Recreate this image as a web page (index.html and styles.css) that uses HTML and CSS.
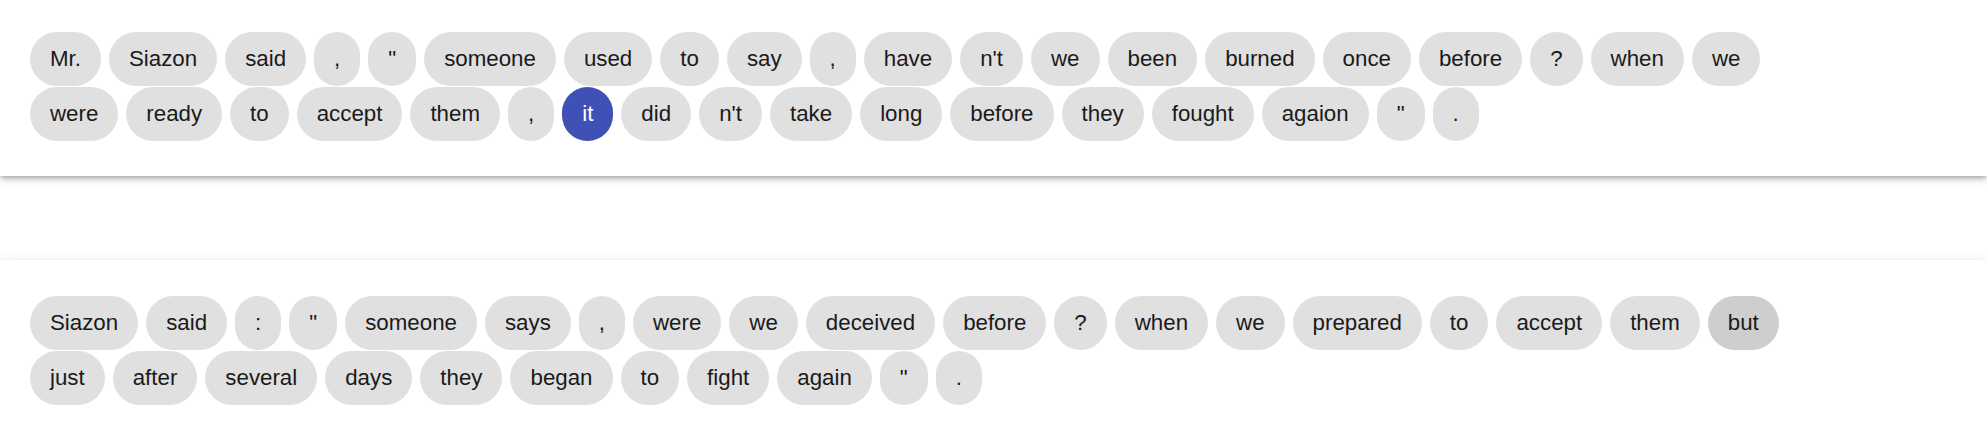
FILE: index.html
```html
<!DOCTYPE html>
<html lang="en">
<head>
<meta charset="utf-8">
<title>Sentence tokens</title>
<link rel="stylesheet" href="styles.css">
</head>
<body>
<main class="page">
  <section class="card">
    <div class="chips">
      <span class="chip">Mr.</span><span class="chip">Siazon</span><span class="chip">said</span><span class="chip">,</span><span class="chip">"</span><span class="chip">someone</span><span class="chip">used</span><span class="chip">to</span><span class="chip">say</span><span class="chip">,</span><span class="chip">have</span><span class="chip">n't</span><span class="chip">we</span><span class="chip">been</span><span class="chip">burned</span><span class="chip">once</span><span class="chip">before</span><span class="chip">?</span><span class="chip">when</span><span class="chip">we</span><span class="chip">were</span><span class="chip">ready</span><span class="chip">to</span><span class="chip">accept</span><span class="chip">them</span><span class="chip">,</span><span class="chip chip-selected">it</span><span class="chip">did</span><span class="chip">n't</span><span class="chip">take</span><span class="chip">long</span><span class="chip">before</span><span class="chip">they</span><span class="chip">fought</span><span class="chip">agaion</span><span class="chip">"</span><span class="chip">.</span>
    </div>
  </section>
  <section class="card card-last">
    <div class="chips">
      <span class="chip">Siazon</span><span class="chip">said</span><span class="chip">:</span><span class="chip">"</span><span class="chip">someone</span><span class="chip">says</span><span class="chip">,</span><span class="chip">were</span><span class="chip">we</span><span class="chip">deceived</span><span class="chip">before</span><span class="chip">?</span><span class="chip">when</span><span class="chip">we</span><span class="chip">prepared</span><span class="chip">to</span><span class="chip">accept</span><span class="chip">them</span><span class="chip chip-hover">but</span><span class="chip">just</span><span class="chip">after</span><span class="chip">several</span><span class="chip">days</span><span class="chip">they</span><span class="chip">began</span><span class="chip">to</span><span class="chip">fight</span><span class="chip">again</span><span class="chip">"</span><span class="chip">.</span>
    </div>
  </section>
</main>
</body>
</html>
```
FILE: styles.css
```css
html, body {
  margin: 0;
  padding: 0;
}
body {
  background: #ffffff;
  font-family: "Liberation Sans", Arial, sans-serif;
  color: #1a1a1a;
  overflow: hidden;
}
.page {
  display: flex;
  flex-direction: column;
  gap: 84px;
  margin-top: -4px;
}
.card {
  background: #ffffff;
  padding: 36px 30px 35px;
  box-shadow: 0 2px 4px -1px rgba(0,0,0,0.24), 0 4px 6px 0 rgba(0,0,0,0.14), 0 1px 12px 0 rgba(0,0,0,0.08);
}
.card-last {
  padding-bottom: 32px;
}
.chips {
  display: flex;
  flex-wrap: wrap;
  column-gap: 8px;
  row-gap: 1px;
  max-width: 1785px;
}
.chip {
  display: inline-block;
  background: #e0e0e0;
  color: #1a1a1a;
  font-size: 22.3px;
  line-height: 34px;
  padding: 10px 20px;
  border-radius: 27px;
  white-space: nowrap;
}
.chip-selected {
  background: #3f51b5;
  color: #ffffff;
}
.chip-hover {
  background: #cecece;
}
```
